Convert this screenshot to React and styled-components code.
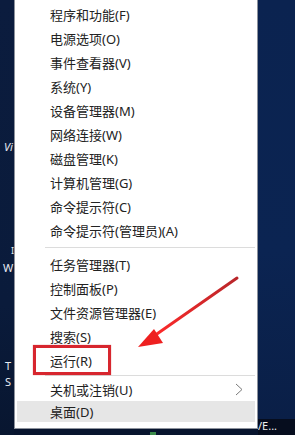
import React from "react";
import styled, { createGlobalStyle } from "styled-components";

const Global = createGlobalStyle`
  html, body { margin: 0; padding: 0; background: #0a1a3a; }
  body { font-family: "Noto Sans", "Noto Sans CJK SC", sans-serif; }
`;

const Screen = styled.div`
  position: relative;
  width: 295px;
  height: 435px;
  overflow: hidden;
  display: flex;
  background: #07142e;
`;

const LeftDesk = styled.div`
  position: relative;
  width: 14px;
  flex: none;
  background: linear-gradient(180deg, #0b1c3e 0%, #0a1b3b 70%, #081630 100%);
`;

const DeskLabel = styled.span`
  position: absolute;
  left: ${(p) => p.$x}px;
  top: ${(p) => p.$y}px;
  color: #e8ecf4;
  font-family: "Noto Sans", sans-serif;
  font-size: ${(p) => p.$size || 11}px;
  line-height: ${(p) => p.$size || 11}px;
  font-style: ${(p) => (p.$italic ? "italic" : "normal")};
  white-space: nowrap;
`;

const MenuColumn = styled.div`
  width: 244px;
  flex: none;
  display: flex;
  flex-direction: column;
  height: 429px;
`;

const Menu = styled.div`
  flex: 1;
  background: #ffffff;
  border-left: 1px solid #8d929c;
  border-right: 1px solid #8d929c;
  border-bottom: 1px solid #8d929c;
  padding: 2px;
  display: flex;
  flex-direction: column;
`;

const Item = styled.div`
  height: ${(p) => p.$h || 24}px;
  flex: none;
  display: flex;
  align-items: center;
  justify-content: space-between;
  padding: 0 12px 0 33px;
  font-size: 13px;
  color: #222222;
  background: ${(p) => (p.$active ? "#e6e6e6" : "transparent")};
  white-space: nowrap;
`;

const Separator = styled.div`
  flex: none;
  height: ${(p) => p.$h}px;
  display: flex;
  align-items: center;
  padding-left: 28px;
  &::after {
    content: "";
    display: block;
    width: 100%;
    height: 1px;
    background: #dcdcdc;
  }
`;

const RightDesk = styled.div`
  flex: 1;
  display: flex;
  flex-direction: column;
`;

const DeskArea = styled.div`
  flex: 1;
  background: linear-gradient(180deg, #0b2350 0%, #0b2452 60%, #0a1f47 100%);
`;

const Taskbar = styled.div`
  height: 16px;
  flex: none;
  background: #060d1e;
  color: #f0f0f0;
  font-family: "Noto Sans", sans-serif;
  font-size: 11px;
  line-height: 14px;
  white-space: nowrap;
  overflow: hidden;
`;

const RedBox = styled.div`
  position: absolute;
  left: 33px;
  top: 345px;
  width: 72px;
  height: 24px;
  border: 3px solid #d7262e;
  box-shadow: 0 0 1px rgba(200, 30, 30, 0.6);
`;

const Arrow = styled.svg`
  position: absolute;
  left: 130px;
  top: 270px;
  width: 115px;
  height: 85px;
  overflow: visible;
`;

const GreenBit = styled.div`
  position: absolute;
  left: 150px;
  top: 432px;
  width: 6px;
  height: 3px;
  background: #3a8a4a;
`;

const Chevron = () => (
  <svg width="8" height="13" viewBox="0 0 8 13">
    <path d="M1 1 L7 6.5 L1 12" fill="none" stroke="#7a7a7a" strokeWidth="1" />
  </svg>
);

const top = [
  "程序和功能(F)",
  "电源选项(O)",
  "事件查看器(V)",
  "系统(Y)",
  "设备管理器(M)",
  "网络连接(W)",
  "磁盘管理(K)",
  "计算机管理(G)",
  "命令提示符(C)",
  "命令提示符(管理员)(A)",
];

const middle = ["任务管理器(T)", "控制面板(P)", "文件资源管理器(E)", "搜索(S)", "运行(R)"];

export default function App() {
  return (
    <>
      <Global />
      <Screen>
        <LeftDesk>
          <DeskLabel $x={4} $y={141} $italic>Vi</DeskLabel>
          <DeskLabel $x={11} $y={246} $size={9}>I</DeskLabel>
          <DeskLabel $x={3} $y={262}>W</DeskLabel>
          <DeskLabel $x={5} $y={360}>T</DeskLabel>
          <DeskLabel $x={5} $y={376}>S</DeskLabel>
        </LeftDesk>
        <MenuColumn>
          <Menu>
            {top.map((t) => (
              <Item key={t}>{t}</Item>
            ))}
            <Separator $h={10} />
            {middle.map((t) => (
              <Item key={t}>{t}</Item>
            ))}
            <Separator $h={6} />
            <Item $h={23}>
              <span>关机或注销(U)</span>
              <Chevron />
            </Item>
            <Item $h={21} $active>桌面(D)</Item>
          </Menu>
        </MenuColumn>
        <RightDesk>
          <DeskArea />
          <Taskbar>/E...</Taskbar>
        </RightDesk>
        <RedBox />
        <Arrow viewBox="0 0 115 85">
          <defs>
            <linearGradient id="ag" x1="0" y1="1" x2="1" y2="0">
              <stop offset="0" stopColor="#ff2a2a" />
              <stop offset="1" stopColor="#b8262a" />
            </linearGradient>
          </defs>
          <line x1="107" y1="8" x2="24" y2="66" stroke="url(#ag)" strokeWidth="3" strokeLinecap="round" />
          <polygon points="8,77 24,59 33,73" fill="#ee2020" />
        </Arrow>
        <GreenBit />
      </Screen>
    </>
  );
}
